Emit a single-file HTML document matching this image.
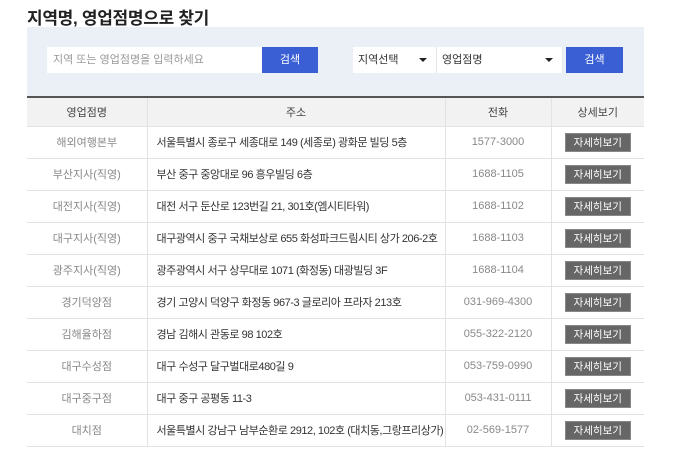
<!DOCTYPE html>
<html><head><meta charset="utf-8"><style>
*{margin:0;padding:0;box-sizing:border-box}
body{width:680px;height:450px;background:#fff;font-family:"Liberation Sans","Noto Sans CJK KR",sans-serif;position:relative;overflow:hidden}
h1{position:absolute;left:27px;top:4px;font-size:17px;font-weight:bold;color:#222;letter-spacing:-0.3px}
.panel{position:absolute;left:27px;top:27px;width:617px;height:69px;background:#ebf0f7}
.inp{position:absolute;top:20px;height:26px;background:#fff;font-size:11px;color:#999;line-height:26px;padding-left:6px}
.btn{position:absolute;top:20px;height:26px;background:#3a5fd4;color:#fff;font-size:11px;line-height:26px;text-align:center}
.sel{position:absolute;top:20px;height:26px;background:#fff;font-size:11px;color:#333;line-height:26px;padding-left:5px;border-right:1px solid #e3e6ea}
.sel:after{content:"";position:absolute;right:9px;top:11px;border-left:4px solid transparent;border-right:4px solid transparent;border-top:4px solid #222}
table{position:absolute;left:27px;top:96px;width:617px;border-collapse:collapse;border-top:2px solid #555;font-size:11px;table-layout:fixed}
td,th{border:1px solid #e2e2e2;height:32px;text-align:center;color:#888;font-weight:normal;white-space:nowrap;overflow:hidden}
th{background:#f2f2f2;color:#444;height:29px}
tr>*:first-child{border-left:none}tr>*:last-child{border-right:none}
td.a{text-align:left;padding-left:9px;color:#333;letter-spacing:-0.45px}
.d{display:inline-block;width:66px;height:19px;background:#666;color:#fff;line-height:18px;font-size:10.5px;border:1px solid #888;vertical-align:middle}
</style></head><body>
<h1>지역명, 영업점명으로 찾기</h1>
<div class="panel">
<div class="inp" style="left:20px;width:215px">지역 또는 영업점명을 입력하세요</div>
<div class="btn" style="left:235px;width:56px">검색</div>
<div class="sel" style="left:326px;width:84px">지역선택</div>
<div class="sel" style="left:410px;width:126px">영업점명</div>
<div class="btn" style="left:539px;width:57px">검색</div>
</div>
<table>
<tr><th style="width:120px">영업점명</th><th style="width:298px">주소</th><th style="width:106px">전화</th><th>상세보기</th></tr>
<tr><td>해외여행본부</td><td class="a">서울특별시 종로구 세종대로 149 (세종로) 광화문 빌딩 5층</td><td>1577-3000</td><td><span class="d">자세히보기</span></td></tr>
<tr><td>부산지사(직영)</td><td class="a">부산 중구 중앙대로 96 흥우빌딩 6층</td><td>1688-1105</td><td><span class="d">자세히보기</span></td></tr>
<tr><td>대전지사(직영)</td><td class="a">대전 서구 둔산로 123번길 21, 301호(엠시티타워)</td><td>1688-1102</td><td><span class="d">자세히보기</span></td></tr>
<tr><td>대구지사(직영)</td><td class="a">대구광역시 중구 국채보상로 655 화성파크드림시티 상가 206-2호</td><td>1688-1103</td><td><span class="d">자세히보기</span></td></tr>
<tr><td>광주지사(직영)</td><td class="a">광주광역시 서구 상무대로 1071 (화정동) 대광빌딩 3F</td><td>1688-1104</td><td><span class="d">자세히보기</span></td></tr>
<tr><td>경기덕양점</td><td class="a">경기 고양시 덕양구 화정동 967-3 글로리아 프라자 213호</td><td>031-969-4300</td><td><span class="d">자세히보기</span></td></tr>
<tr><td>김해율하점</td><td class="a">경남 김해시 관동로 98 102호</td><td>055-322-2120</td><td><span class="d">자세히보기</span></td></tr>
<tr><td>대구수성점</td><td class="a">대구 수성구 달구벌대로480길 9</td><td>053-759-0990</td><td><span class="d">자세히보기</span></td></tr>
<tr><td>대구중구점</td><td class="a">대구 중구 공평동 11-3</td><td>053-431-0111</td><td><span class="d">자세히보기</span></td></tr>
<tr><td>대치점</td><td class="a">서울특별시 강남구 남부순환로 2912, 102호 (대치동,그랑프리상가)</td><td>02-569-1577</td><td><span class="d">자세히보기</span></td></tr>
</table>
</body></html>
